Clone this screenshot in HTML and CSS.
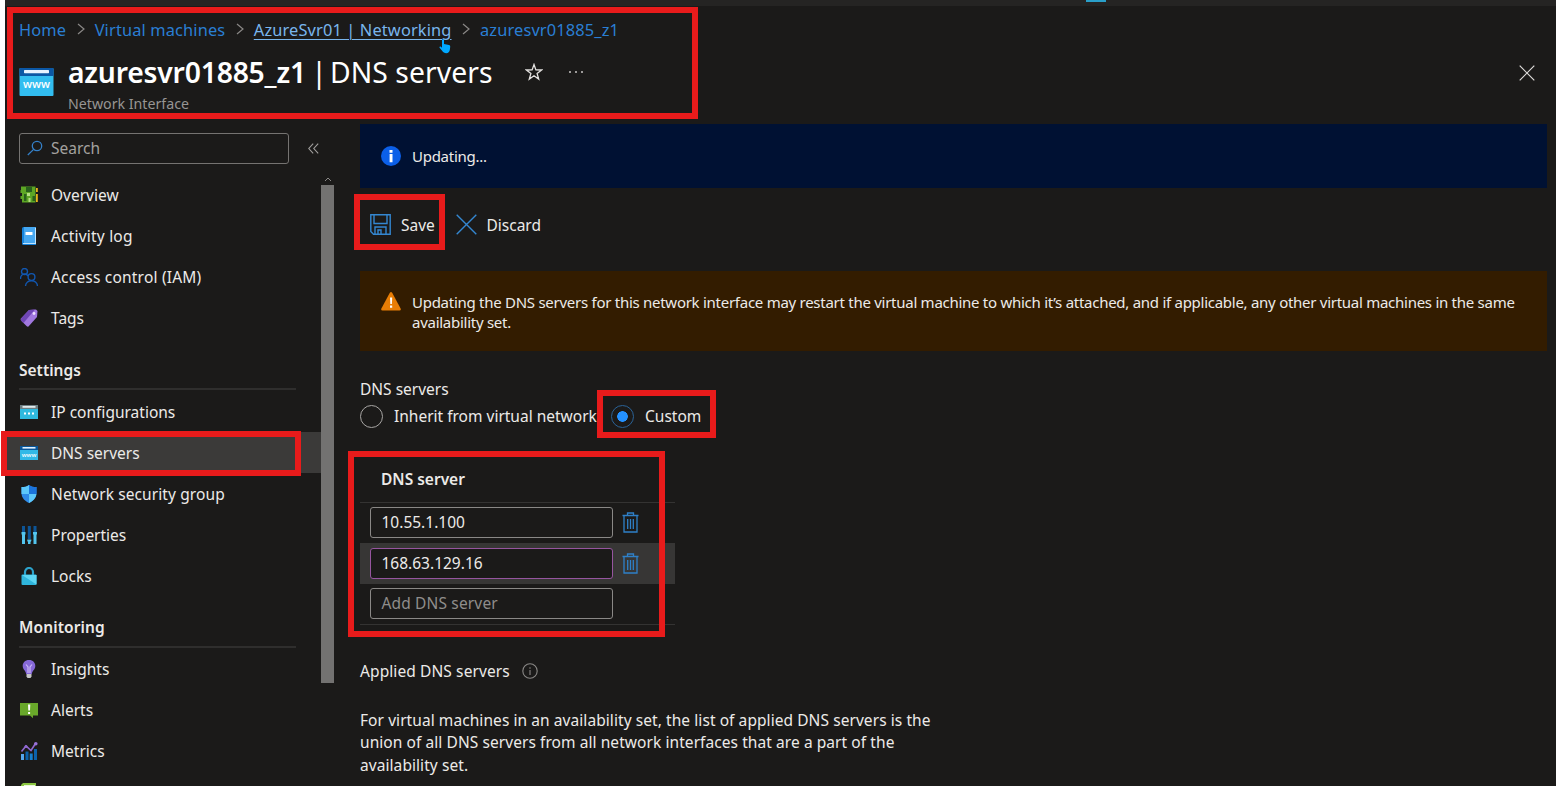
FILE: index.html
```html
<!DOCTYPE html>
<html lang="en">
<head>
<meta charset="utf-8">
<title>azuresvr01885_z1 | DNS servers</title>
<link rel="stylesheet" href="styles.css">
</head>
<body>
<div class="portal">
  <div class="topbar"><span class="topbar-tab"></span></div>

  <header class="header">
    <nav class="crumbs">
      <a>Home</a><svg class="chev" viewBox="0 0 8 12"><path d="M1 1l6 5-6 5"/></svg>
      <a>Virtual machines</a><svg class="chev" viewBox="0 0 8 12"><path d="M1 1l6 5-6 5"/></svg>
      <a class="hovered">AzureSvr01 | Networking<svg class="cursor" viewBox="0 0 12 15"><path d="M3 1.2c0-1.400 2-1.400 2 0V5l5 1c1 .3 1.300 1 1.200 2l-.4 3c-.3 2-1.500 3.200-3.500 3.200-2 0-3-.8-4-2.200L.6 8.800c-.6-1 .5-1.700 1.300-1L3 8.800z" fill="#00a8ff"/></svg></a><svg class="chev" viewBox="0 0 8 12"><path d="M1 1l6 5-6 5"/></svg>
      <a>azuresvr01885_z1</a>
    </nav>
    <div class="title-row">
      <svg class="res-icon" viewBox="0 0 34 28"><rect width="34" height="28" rx="1" fill="#32bdf0"/><path d="M0 8V1q0-1 1-1h32q1 0 1 1v7z" fill="#0b57a5"/><rect x="4.500" y="2" width="25" height="3.200" rx=".6" fill="#e6f2ff"/><text x="17" y="20" text-anchor="middle" class="www-lg">www</text></svg>
      <div class="title-block">
        <div class="title-line">
          <h1><b>azuresvr01885_z1</b><span class="bar"> | </span><span>DNS servers</span></h1>
          <svg class="star" viewBox="0 0 18 18"><path d="M9 1.500l1.900 5.400 5.700.1-4.500 3.500 1.600 5.600L9 12.800l-4.700 3.300 1.600-5.600L1.400 7l5.700-.1z"/></svg>
          <svg class="dots" viewBox="0 0 16 4"><circle cx="2" cy="2" r="1"/><circle cx="8" cy="2" r="1"/><circle cx="14" cy="2" r="1"/></svg>
        </div>
        <div class="subtitle">Network Interface</div>
      </div>
      <svg class="close" viewBox="0 0 16 16"><path d="M.7.700l14.600 14.600M15.300.7L.7 15.300"/></svg>
    </div>
  </header>

  <div class="body">
    <aside class="side">
      <div class="side-main">
        <div class="search-row">
          <div class="search"><svg viewBox="0 0 16 16"><circle cx="10" cy="6" r="4.700"/><path d="M6.600 9.400L.8 15"/></svg><span>Search</span></div>
          <svg class="collapse" viewBox="0 0 11 11"><path d="M5.200.7L.8 5.500l4.400 4.800M10.200.7L5.800 5.500l4.400 4.800"/></svg>
        </div>
        <ul class="menu">
          <li><svg viewBox="0 0 18 18"><path d="M1 .5h14.500v16H2V13H.5v-3H2V7H.5V4H1z" fill="#5da625"/><path d="M6 1h6v5H6zM4 8h2.500v7H4zM12.500 10H15v5h-2.500z" fill="#28601c"/><path d="M7 7h3v3H7zM8.500 12h2v4h-2z" fill="#b4df83"/><path d="M16 2h1.800v4H16zM16 8h1.800v8H16z" fill="#e9b51b"/></svg><span>Overview</span></li>
          <li><svg viewBox="0 0 18 18"><path d="M2 1.500Q2 0 3.500 0H16v18H3.500Q2 18 2 16.500z" fill="#1583dc"/><path d="M4 0h12v16H4z" fill="#46a7f0"/><path d="M15 1h1v16H3v-1h12z" fill="#bfe4ff"/><rect x="5.500" y="5" width="7" height="3" rx=".5" fill="#fff"/></svg><span class="looser">Activity log</span></li>
          <li><svg viewBox="0 0 18 18" fill="none" stroke="#1257b0" stroke-width="1.400"><circle cx="4.500" cy="3.500" r="3"/><path d="M.5 11c0-6 6-6 7.500-3"/><circle cx="11.500" cy="9" r="3.400"/><path d="M5.500 18c.5-7 11.500-7 12 0"/></svg><span class="looser">Access control (IAM)</span></li>
          <li><svg viewBox="0 0 18 18"><path d="M1 9.500L9 1l7-.5 1.500 1.500-.5 6-8.500 9.500Q7.500 18 6.500 17L1 11.500q-.7-1 0-2z" fill="#a178df"/><path d="M1 9.500L9 1l6-.5L3.500 14 1 11.500z" fill="#6f46b5"/><circle cx="14" cy="4.500" r="1.400" fill="#eee0ff"/></svg><span>Tags</span></li>
        </ul>
        <h2>Settings</h2>
        <ul class="menu">
          <li><svg viewBox="0 0 18 18"><path d="M0 2h18v14H0z" fill="#2fb9de"/><path d="M0 2h18v4H0z" fill="#6e7e83"/><path d="M2.500 3h13v1.800h-13z" fill="#e3eaec"/><path d="M4 9.500h2v2H4zm4 0h2v2H8zm4 0h2v2h-2z" fill="#fff"/></svg><span>IP configurations</span></li>
          <li class="selected"><svg viewBox="0 0 18 18"><path d="M0 2h18v14H0z" fill="#32b9e7"/><path d="M0 2h18v4H0z" fill="#0a579b"/><path d="M2.500 3h13v1.600h-13z" fill="#dff0ff"/><text x="9" y="12.500" text-anchor="middle" class="www-sm">www</text></svg><span>DNS servers</span></li>
          <li><svg viewBox="0 0 18 18"><path d="M9 0c2 1.700 4.500 2 7.500 2v6c0 5-3.500 8-7.500 10-4-2-7.500-5-7.500-10V2C4.500 2 7 1.700 9 0z" fill="#2f8be8"/><path d="M9 0v9H1.500V2C4.500 2 7 1.700 9 0z" fill="#5cc8fb"/><path d="M9 9h7.400c-.5 4.500-3.700 7.200-7.400 9z" fill="#5cc8fb"/><path d="M9 0c2 1.700 4.500 2 7.500 2v6l-.1 1H9z" fill="#1b74dc"/></svg><span class="loose">Network security group</span></li>
          <li><svg viewBox="0 0 18 18"><path d="M2 0h3v7H2zM7.800 0h3v13h-3zM13.500 0h3v7h-3z" fill="#0d5597"/><path d="M1.500 6h4v2L5 9v9H2V9l-.5-1zM7.300 13.500h4V15l-.8 1v2H8v-2l-.7-1zM13 6h4v2l-.5 1v9h-3V9L13 8z" fill="#53c5ee"/></svg><span>Properties</span></li>
          <li><svg viewBox="0 0 18 18"><path d="M5 8V5a4 4 0 0 1 8 0v3" fill="none" stroke="#2ca3cc" stroke-width="2.200"/><rect x="1.500" y="7.500" width="15" height="10.500" rx="1" fill="#2fb5dc"/><path d="M2 8h14.500v9.500z" fill="#5dd6f4"/></svg><span>Locks</span></li>
        </ul>
        <h2 class="loose">Monitoring</h2>
        <ul class="menu">
          <li><svg viewBox="0 0 18 18"><path d="M9 0c4 0 6.300 2.700 6.300 6 0 3.500-3 4.500-3.500 8H6.200C5.700 10.500 2.700 9.500 2.700 6 2.700 2.700 5 0 9 0z" fill="#8668d8"/><path d="M6 4.500l2 2.500v6M12 4.500L10 7v6" fill="none" stroke="#cbb9f5" stroke-width="1.200"/><path d="M6.500 14h5v2.500L10.500 18h-3l-1-1.500z" fill="#c5c5c8"/></svg><span>Insights</span></li>
          <li><svg viewBox="0 0 18 18"><path d="M0 2h18v12.500h-5v2.800l-3-2.800H0z" fill="#69a82a"/><path d="M8 3.500h2.300L10 9.500H8.300zM8.100 11h2v2h-2z" fill="#fff"/></svg><span>Alerts</span></li>
          <li><svg viewBox="0 0 18 18"><path d="M1 12h3v6H1z" fill="#55a6ee"/><path d="M5.500 9.500h3V18h-3zM14 7h3v11h-3z" fill="#0b61ac"/><path d="M9.700 11.500h3V18h-3z" fill="#1780d0"/><path d="M1.500 9.500L6 4l5 4.500 4.500-7" fill="none" stroke="#9068d0" stroke-width="1.600"/><circle cx="15.800" cy="1.800" r="1.800" fill="#9871d8"/><circle cx="6" cy="4.500" r="1.500" fill="#9068d0"/></svg><span>Metrics</span></li>
          <li><svg viewBox="0 0 18 18"><path d="M3 0h13v18H1V2z" fill="#8bc642"/><path d="M4 2h11v14H4z" fill="#e9f5d8"/></svg></li>
        </ul>
      </div>
      <div class="scroll"><svg viewBox="0 0 8 5"><path d="M1 4l3-3 3 3"/></svg><div class="thumb"></div></div>
    </aside>

    <main class="main">
      <div class="info"><svg viewBox="0 0 20 20"><circle cx="10" cy="10" r="10" fill="#0b5fe8"/><path d="M8.500 4h3v2.700h-3zM8.600 8h2.900v8.300H8.600z" fill="#fff"/></svg><span>Updating...</span></div>
      <div class="commands">
        <div class="cmd save"><svg viewBox="0 0 21 21"><path d="M.8.800h19.400v19.400H3.500L.8 17.500zM4 1v8.500h13V1M5 20v-7h11v7M8 20v-4h3v4"/></svg><span>Save</span></div>
        <div class="cmd"><svg viewBox="0 0 21 21"><path d="M.7.700l19.600 19.600M20.300.7L.7 20.300"/></svg><span>Discard</span></div>
      </div>
      <div class="warn"><svg viewBox="0 0 20 19"><path d="M8.700 1Q10-.8 11.300 1l8.300 15.500q.8 2-1.200 2H1.600q-2 0-1.200-2z" fill="#e87d05"/><path d="M9 5.500h2.200l-.3 6.500H9.300zM9 13.500h2.200v2.200H9z" fill="#fff"/></svg><p>Updating the DNS servers for this network interface may restart the virtual machine to which it’s attached, and if applicable, any other virtual machines in the same<br>availability set.</p></div>
      <div class="label">DNS servers</div>
      <div class="radios">
        <div class="radio"><span class="ring"></span><span>Inherit from virtual network</span></div>
        <div class="radio on"><span class="ring"></span><span>Custom</span></div>
      </div>
      <div class="table">
        <div class="thead">DNS server</div>
        <div class="row first"><div class="field">10.55.1.100</div><svg viewBox="0 0 17 21"><path d="M.5 3.500h16M5.500 3.500v-2.500h6v2.500M2 3.500v16.500h13V3.500M5.700 7v10M8.500 7v10M11.300 7v10"/></svg></div>
        <div class="row active"><div class="field">168.63.129.16</div><svg viewBox="0 0 17 21"><path d="M.5 3.500h16M5.500 3.500v-2.500h6v2.500M2 3.500v16.500h13V3.500M5.700 7v10M8.500 7v10M11.300 7v10"/></svg></div>
        <div class="row"><div class="field empty">Add DNS server</div></div>
      </div>
      <div class="applied loose"><span>Applied DNS servers</span><svg viewBox="0 0 16 16"><circle cx="8" cy="8" r="7.200"/><path d="M8 7v5M8 4.200v1.500"/></svg></div>
      <p class="note">For virtual machines in an availability set, the list of applied DNS servers is the<br>union of all DNS servers from all network interfaces that are a part of the<br>availability set.</p>
    </main>
  </div>

  <div class="mark mark-header"></div>
  <div class="mark mark-nav"></div>
  <div class="mark mark-save"></div>
  <div class="mark mark-custom"></div>
  <div class="mark mark-table"></div>
</div>
</body>
</html>
```
FILE: styles.css
```css
* { box-sizing: border-box; }
body { margin: 0; background: #fff; overflow: hidden; font-family: "Noto Sans", "Open Sans", sans-serif; font-size: 15.5px; color: #eceae8; }
h1, h2, p, ul { margin: 0; padding: 0; }
ul { list-style: none; }
svg { display: block; flex: none; }
span, a, h1, .field, .thead, .label, .subtitle { white-space: nowrap; }
.loose { letter-spacing: 0.1px; }
.looser { letter-spacing: 0.2px; }

.portal { position: relative; height: 786px; padding-left: 5px; overflow: hidden; background: #1b1a19 content-box; display: flex; flex-direction: column; }
.topbar { height: 6px; flex: none; background: #252423; }
.topbar-tab { display: block; width: 20px; height: 2px; margin-left: 1081px; background: #2a9fc9; }

.header { height: 118px; flex: none; padding: 11px 20px 0 14px; }
.crumbs { display: flex; align-items: center; height: 24px; font-size: 16.4px; letter-spacing: 0.13px; color: #2a7fd4; }
.chev { width: 8px; height: 12px; margin: 0 10px 0 10.5px; fill: none; stroke: #8a8886; stroke-width: 1.2; }
.hovered { position: relative; color: #79b5ec; text-decoration: underline; text-underline-offset: 3px; text-decoration-thickness: 1px; }
.cursor { position: absolute; left: 185px; top: 21px; width: 12px; height: 15px; }
.title-row { display: flex; align-items: flex-start; padding-top: 9px; }
.res-icon { width: 35px; height: 28px; margin: 18px 14px 0 0; }
.www-lg { font: 600 11px "Open Sans", sans-serif; fill: #fff; }
.www-sm { font: 600 6px "Open Sans", sans-serif; fill: #fff; }
.title-line { display: flex; align-items: center; height: 44px; }
h1 { font-size: 28.3px; font-weight: 400; line-height: 44px; color: #fff; }
h1 b { font-weight: 600; letter-spacing: -0.2px; }
h1 span { white-space: pre; letter-spacing: 0.08px; }
h1 .bar { letter-spacing: -2.1px; }
.star { width: 18px; height: 18px; margin-left: 32px; fill: none; stroke: #e4e2e0; stroke-width: 1.3; }
.dots { width: 16px; height: 4px; margin-left: 25px; fill: #c8c6c4; }
.subtitle { margin-top: 0.6px; font-size: 14.2px; line-height: 18px; color: #979593; }
.close { width: 16px; height: 16px; margin: 15px 1px 0 auto; fill: none; stroke: #dedcda; stroke-width: 1.2; }

.body { display: flex; flex: 1; min-height: 0; }
.side { width: 329px; flex: none; display: flex; }
.side-main { width: 316px; flex: none; }
.search-row { display: flex; align-items: center; height: 50px; padding: 0 0 2px 14px; }
.search { display: flex; align-items: center; gap: 8px; width: 270px; height: 31px; padding-left: 7px; border: 1px solid #757371; border-radius: 3px; color: #a3a19f; }
.search svg { width: 16px; height: 16px; fill: none; stroke: #3580c8; stroke-width: 1.3; }
.collapse { width: 11px; height: 11px; margin-left: 19px; fill: none; stroke: #a19f9d; stroke-width: 1.1; }
.menu li { display: flex; align-items: center; gap: 13.5px; height: 41px; padding-left: 14.5px; }
.menu svg { width: 18px; height: 18px; }
.menu .selected { background: #3b3a39; }
h2 { height: 53px; margin: 0 25px 0 14px; padding-top: 20.5px; font-size: 15.5px; line-height: 22px; font-weight: 600; background: linear-gradient(#2f2e2d, #2f2e2d) 0 50px / 100% 2px no-repeat; }
h2.loose { height: 52.4px; padding-top: 20px; background-position: 0 49.5px; }
.scroll { width: 13px; padding-top: 53px; }
.scroll svg { width: 8px; height: 5px; margin: 0 auto 3px; fill: none; stroke: #8a8886; }
.thumb { height: 498px; background: #737271; }

.main { flex: 1; min-width: 0; padding: 0 9px 0 26px; }
.info { display: flex; align-items: center; gap: 11px; height: 64px; padding-left: 21px; background: #001133; font-size: 15px; letter-spacing: -0.27px; }
.info svg { width: 20px; height: 20px; }
.commands { display: flex; align-items: center; height: 83px; padding: 0 0 10px 10px; }
.cmd { display: flex; align-items: center; gap: 10px; }
.cmd svg { width: 21px; height: 21px; fill: none; stroke: #3487d1; stroke-width: 1.4; }
.save { width: 85.500px; }
.warn { display: flex; gap: 11px; height: 80px; padding: 21px 0 0 21px; background: #331c00; font-size: 15px; letter-spacing: -0.27px; }
.warn svg { width: 20px; height: 19px; }
.warn p { line-height: 20px; white-space: nowrap; }
.label { margin-top: 27px; line-height: 22px; }
.radios { display: flex; height: 32px; align-items: center; }
.radio { display: flex; align-items: center; gap: 11px; width: 251px; }
.ring { width: 23px; height: 23px; border: 1px solid #a8a6a4; border-radius: 50%; }
.on .ring { border-color: #2a6296; background: radial-gradient(circle, #2491ff 0 5px, transparent 5.600px); }
.table { width: 315px; margin-top: 24px; border-bottom: 1px solid #343332; }
.thead { height: 47px; padding-left: 21px; line-height: 46px; font-weight: 600; border-bottom: 1px solid #343332; }
.row { display: flex; align-items: center; gap: 9px; height: 40px; padding-left: 10px; }
.row svg { width: 17px; height: 21px; fill: none; stroke: #2f80c8; stroke-width: 1.3; }
.first { height: 39.5px; }
.active { height: 41px; background: #373635; }
.field { width: 243px; height: 31px; padding-left: 10.5px; line-height: 28px; border: 1px solid #8a8886; border-radius: 3px; background: #1b1a19; }
.active .field { border-color: #96559f; }
.empty { color: #8f8d8b; letter-spacing: 0.15px; }
.applied { display: flex; align-items: center; gap: 12px; height: 24px; margin-top: 34px; }
.applied svg { width: 16px; height: 16px; fill: none; stroke: #8a8886; stroke-width: 1.1; }
.note { margin-top: 26px; line-height: 22.500px; letter-spacing: 0.07px; white-space: nowrap; }

.mark { position: absolute; border: 6px solid #e81b1b; pointer-events: none; }
.mark-header { left: 7px; top: 7px; width: 691px; height: 112px; }
.mark-nav { left: 1px; top: 431px; width: 300px; height: 45px; }
.mark-save { left: 354px; top: 194px; width: 91px; height: 56px; }
.mark-custom { left: 597px; top: 390px; width: 119px; height: 48px; }
.mark-table { left: 348px; top: 451px; width: 317px; height: 186px; }
```
